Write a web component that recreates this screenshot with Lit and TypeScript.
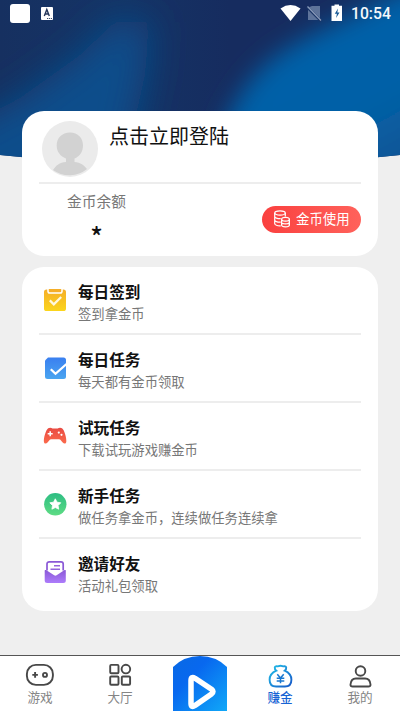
import { LitElement, html, css, svg } from "lit";
import { customElement } from "lit/decorators.js";

const calendar = svg`
  <defs><linearGradient id="y" x1="0" y1="0" x2="0" y2="1"><stop offset="0" stop-color="#f5ae28"/><stop offset="1" stop-color="#fbd51c"/></linearGradient></defs>
  <rect x="1" y="1.5" width="22" height="21.5" rx="2.6" fill="url(#y)"/>
  <path d="M5 1v2.2a1.8 1.8 0 0 0 1.8 1.8h10.4a1.8 1.8 0 0 0 1.8-1.8V1" fill="#f5ae28" stroke="#fff" stroke-width="1.5"/>
  <path d="M6.800 12.400l4 4 7.400-7.400" fill="none" stroke="#fff8e0" stroke-width="2.200"/>`;
const task = svg`
  <defs><linearGradient id="b" x1="0" y1="0" x2="0" y2="1"><stop offset="0" stop-color="#3a7ff0"/><stop offset="1" stop-color="#4aa5f0"/></linearGradient></defs>
  <path d="M5 1.5h15.5A2.500 2.500 0 0 1 23 4v16.500a2.500 2.500 0 0 1-2.500 2.500h-16A2.500 2.500 0 0 1 2 20.500V4.500z" fill="url(#b)"/>
  <path d="M7.800 13.200l4.700 4.600L23.500 8" fill="none" stroke="#fff" stroke-width="2.300"/>`;
const pad = svg`
  <defs><linearGradient id="r" x1="0" y1="0" x2="0" y2="1"><stop offset="0" stop-color="#e84a42"/><stop offset="1" stop-color="#fb6a4c"/></linearGradient></defs>
  <path d="M5.200 4.200C6.500 3.400 8.500 3.500 9.500 4.600h5.200C15.700 3.500 17.700 3.400 19 4.200c2.500 1.500 4.700 10.500 4.300 13.500-.3 2.200-2.200 2.400-3.600.9-1.300-1.400-1.900-3.300-3.800-3.300H8.300c-1.900 0-2.500 1.900-3.800 3.300-1.400 1.500-3.300 1.300-3.600-.9C.5 14.700 2.700 5.700 5.200 4.200z" fill="url(#r)"/>
  <path d="M4.700 9.700h5M7.200 7.200v5" stroke="#fff" stroke-width="1.500"/><circle cx="15.800" cy="8.600" r="1.100" fill="#fff"/><circle cx="18.500" cy="10.800" r="1.100" fill="#fff"/>`;
const star = svg`
  <defs><linearGradient id="g" x1="0" y1="0" x2="0" y2="1"><stop offset="0" stop-color="#2dbd83"/><stop offset="1" stop-color="#5edc84"/></linearGradient></defs>
  <circle cx="12.300" cy="12.300" r="11.200" fill="url(#g)"/>
  <path d="M12.300 6.800l1.700 3.400 3.800.6-2.700 2.700.6 3.700-3.400-1.700-3.400 1.700.6-3.700-2.700-2.700 3.800-.6z" fill="#fff" stroke="#fff" stroke-width=".8" stroke-linejoin="round"/>`;
const mail = svg`
  <defs><linearGradient id="p" x1="0" y1="0" x2="0" y2="1"><stop offset="0" stop-color="#8a58d6"/><stop offset="1" stop-color="#ad7cfb"/></linearGradient></defs>
  <path d="M4 10.500V4a2.200 2.200 0 0 1 2.200-2.200h11.800a2.200 2.200 0 0 1 2.200 2.200v6.500" fill="#fff" stroke="#8a58d6" stroke-width="1.700"/>
  <path d="M11 5.800h6M7.500 9.300h9.500" stroke="#9564dc" stroke-width="1.500"/>
  <path d="M1.700 10.500Q1.700 9.500 3 10.100l8.200 5.200q1.200.7 2.400 0l8-5.200q1.200-.6 1.200.4v10a2.500 2.500 0 0 1-2.500 2.500H4.200a2.500 2.500 0 0 1-2.500-2.500z" fill="url(#p)"/>`;

const rows = [
  { icon: calendar, title: "每日签到", note: "签到拿金币" },
  { icon: task, title: "每日任务", note: "每天都有金币领取" },
  { icon: pad, title: "试玩任务", note: "下载试玩游戏赚金币" },
  { icon: star, title: "新手任务", note: "做任务拿金币，连续做任务连续拿" },
  { icon: mail, title: "邀请好友", note: "活动礼包领取" },
];

const tabs = [
  { name: "游戏", icon: svg`<rect x="1.900" y="4.900" width="26" height="20" rx="9"/><path d="M7.300 14.900h5.600M10.100 12.100v5.600"/><circle cx="20" cy="14.900" r="2"/>` },
  { name: "大厅", icon: svg`<rect x="5.200" y="4.900" width="8.300" height="8.300" rx="1"/><circle cx="20.900" cy="9.100" r="4.300"/><rect x="5.200" y="16.500" width="8.300" height="8.300" rx="1"/><rect x="16.800" y="16.500" width="8.300" height="8.300" rx="1"/>` },
  null,
  { name: "赚金", active: true, icon: svg`
    <defs><linearGradient id="m" x1="0" y1="0" x2="1" y2="1"><stop offset="0" stop-color="#20c0e8"/><stop offset="1" stop-color="#1658c8"/></linearGradient></defs>
    <g stroke="url(#m)"><path d="M11.300 10.700C9 9 9.300 5.800 12 6.300c1.300.3 1.600-.5 3.500-.5s2.200.8 3.500.5c2.700-.5 3 2.700.7 4.400 4.500 2 6.700 5.500 6.700 9 0 4.500-2.800 6.800-6.500 6.800h-8.800c-3.700 0-6.500-2.300-6.500-6.800 0-3.500 2.200-7 6.700-9z"/></g>
    <path stroke="#1a78d0" stroke-width="1.500" d="M12.300 14.300l3.200 3.700 3.200-3.700M15.500 18v5.300M11.700 18.200h7.600M11.700 20.900h7.600"/>` },
  { name: "我的", icon: svg`<circle cx="15.500" cy="11" r="4.800"/><path d="M7.700 26.500h15.600q2.400 0 2.200-2c-.3-3.800-2.400-6-5.400-6h-9.200c-3 0-5.100 2.200-5.400 6q-.2 2 2.200 2z"/>` },
];

@customElement("app-root")
export class AppRoot extends LitElement {
  static styles = css`
    :host { display: block; height: 711px; width: 400px; overflow: hidden; background: #efefef; font-family: Roboto, "Noto Sans CJK SC", sans-serif; color: #111; }
    * { box-sizing: border-box; }
    svg { display: block; flex: none; }
    .page { position: relative; height: 711px; display: flex; flex-direction: column; }
    .backdrop { position: absolute; left: 0; top: 0; }
    .status { position: relative; height: 27px; display: flex; align-items: center; padding: 0 9px 0 10px; }
    .spacer { flex: 1; }
    .clock { color: #f4f7fb; font: 500 15.700px/28px Roboto, sans-serif; margin-left: 8px; width: 40px; white-space: nowrap; }
    .content { position: relative; flex: 1; padding: 84px 22px 0; }
    .card { background: #fff; border-radius: 22px; }
    .profile { height: 144.500px; padding: 10px 17px 0; }
    .user { display: flex; height: 63px; padding-left: 3px; border-bottom: 2px solid #ededed; }
    .login { font-size: 20px; line-height: 30px; margin-left: 11px; padding-top: 1px; }
    .wallet { display: flex; justify-content: space-between; }
    .balance { width: 115px; text-align: center; padding-top: 7px; }
    .label { font-size: 14.700px; line-height: 22px; color: #777; }
    .amount { font: 500 26px/30px "Noto Sans CJK SC", sans-serif; padding-top: 8px; }
    .use { display: flex; align-items: center; width: 99px; height: 27px; border-radius: 14px; margin-top: 21.500px; padding-left: 12px; gap: 6px; background: linear-gradient(90deg, #fa403f, #ff625b); color: #fff; font-size: 13.400px; line-height: 26px; white-space: nowrap; }
    .use span { padding-top: 2px; }
    .list { height: 344px; margin-top: 11.500px; padding: 0 17px; }
    .row { height: 68.100px; display: flex; border-bottom: 2px solid #ededed; padding-left: 4px; }
    .row:last-child { border: 0; }
    .row svg { margin-top: 21px; }
    .words { margin-left: 11px; padding-top: 15px; }
    .title { font-size: 15.600px; line-height: 22px; font-weight: 700; }
    .note { font-size: 13.330px; line-height: 22px; color: #777; }
    .tabs { position: relative; height: 56px; background: #fff; border-top: 1px solid #555; display: grid; grid-template-columns: repeat(5, 80px); }
    .tab { display: flex; flex-direction: column; align-items: center; font-size: 12.600px; line-height: 20px; color: #858585; }
    .tab svg { fill: none; stroke: #484848; stroke-width: 1.900; margin-top: 4px; }
    .tab svg, .play svg { overflow: visible; }
    .active { color: #1864d4; }
    .active .name { font-weight: 500; }
    .name { margin-top: -2px; }
    .play { display: flex; justify-content: center; }
  `;

  render() {
    return html`
      <div class="page">
        <svg class="backdrop" width="400" height="180" viewBox="0 0 400 180">
          <defs>
            <clipPath id="curve"><path d="M0 0H400V155Q200 177 0 155z" /></clipPath>
            <linearGradient id="navy" gradientUnits="userSpaceOnUse" x1="0" y1="0" x2="230" y2="0">
              <stop offset="0" stop-color="#163060" /><stop offset=".5" stop-color="#143466" /><stop offset="1" stop-color="#162c5f" />
            </linearGradient>
            <linearGradient id="sky" gradientUnits="userSpaceOnUse" x1="330" y1="60" x2="390" y2="170">
              <stop offset="0" stop-color="#0561a8" /><stop offset=".5" stop-color="#0560a6" /><stop offset="1" stop-color="#0b5595" />
            </linearGradient>
            <filter id="wide" filterUnits="userSpaceOnUse" x="-100" y="-100" width="600" height="400"><feGaussianBlur stdDeviation="18" /></filter>
            <filter id="soft" filterUnits="userSpaceOnUse" x="-100" y="-100" width="700" height="500"><feGaussianBlur stdDeviation="12" /></filter>
          </defs>
          <g clip-path="url(#curve)">
            <rect width="400" height="180" fill="url(#navy)" />
            <path d="M-60 140L20 98L80 55L115 22L150 22L145 75L135 120L100 230H-60z" fill="#0b4e8b" filter="url(#wide)" />
            <path d="M410 -15C345 22 290 38 258 72Q240 90 224 125V240H500V-15z" fill="url(#sky)" filter="url(#soft)" />
          </g>
        </svg>
        <div class="status">
          <svg width="45" height="27" viewBox="10 0 45 27">
            <rect x="10" y="4" width="20" height="19" rx="3" fill="#fff" /><rect x="41" y="7" width="12" height="13" rx="1" fill="#fff" />
            <path d="M44.300 16l2.500-6.500 2.500 6.500M45.200 14h3.200" fill="none" stroke="#243559" stroke-width="1.400" /><path d="M47 18.500h5" stroke="#40516e" stroke-dasharray="1.200 .7" />
          </svg>
          <div class="spacer"></div>
          <svg width="63" height="27" viewBox="281 0 63 27">
            <path d="M281.500 8.400Q291.500 1.500 301.500 8.400L291.500 21z" fill="#fff" />
            <path d="M310.500 7l2.500-1h8v14h-12V8z" fill="#8598b8" opacity=".65" /><path d="M308 7l14 14" stroke="#1a3566" stroke-width="2.500" /><path d="M308.500 6.500l13.500 14" stroke="#8a9ab9" stroke-width="1.300" />
            <path d="M335.500 4.500h4.500v1.300h3V21h-10.500V5.800h3z" fill="#fff" /><path d="M339 8.500l-3.200 5.200h2.100l-.8 4.300 3.400-5.600h-2.200z" fill="#145795" />
          </svg>
          <div class="clock">10:54</div>
        </div>
        <div class="content">
          <section class="card profile">
            <div class="user">
              <svg width="56" height="56" viewBox="0 0 56 56">
                <circle cx="28" cy="28" r="28" fill="#ebebeb" />
                <path d="M28 11.500c8 0 13 5.500 13 13 0 6.500-3.500 11-8.500 13v3.500c6 .4 9.800 3.300 12.500 7A28 28 0 0 1 11 49c3-4.500 6.500-7.500 13-8v-3.500c-5.500-2.200-9.300-6.500-9.300-13 0-7.500 5.300-13 13.300-13z" fill="#d2d2d2" />
              </svg>
              <div class="login">点击立即登陆</div>
            </div>
            <div class="wallet">
              <div class="balance"><div class="label">金币余额</div><div class="amount">*</div></div>
              <div class="use">
                <svg width="16" height="18" viewBox="0 0 16 18" fill="none" stroke="#fff" stroke-width="1.200">
                  <ellipse cx="6" cy="3" rx="5.300" ry="2.200" /><path d="M.7 3v10.500c0 1.400 2.500 2.500 6 2.300M11.300 3v3.500M.7 6.500c0 1.400 2.500 2.300 6 2.200M.7 10c0 1.400 2.500 2.300 6 2.200" />
                  <ellipse cx="11.500" cy="9.300" rx="3.900" ry="1.900" /><path d="M7.600 9.300v5.800c0 2.400 7.800 2.400 7.800 0V9.300M7.600 12.200c0 2.200 7.800 2.200 7.800 0" />
                </svg>
                <span>金币使用</span>
              </div>
            </div>
          </section>
          <section class="card list">
            ${rows.map((r) => html`<div class="row"><svg width="24" height="24" viewBox="0 0 24 24">${r.icon}</svg>
              <div class="words"><div class="title">${r.title}</div><div class="note">${r.note}</div></div></div>`)}
          </section>
        </div>
        <nav class="tabs">
          ${tabs.map((t) => t
            ? html`<div class="tab ${t.active ? "active" : ""}"><svg width="30" height="30" viewBox="0 0 30 30">${t.icon}</svg><div class="name">${t.name}</div></div>`
            : html`<div class="play"><svg width="54" height="55" viewBox="0 0 54 55">
                <defs><linearGradient id="pl" x1="0" y1="0" x2="1" y2="1"><stop offset="0" stop-color="#0869e4" /><stop offset=".35" stop-color="#0868ef" /><stop offset="1" stop-color="#10a8f8" /></linearGradient></defs>
                <path d="M0 11Q11 0 27 0T54 11V55H0z" fill="url(#pl)" />
                <path d="M18 24.500Q18 20 22 22.300L38.500 33.200Q41.500 35.500 38.500 38L22 49.500Q18 52 18 47.500z" fill="none" stroke="#fff" stroke-width="5.500" stroke-linejoin="round" />
              </svg></div>`)}
        </nav>
      </div>`;
  }
}
